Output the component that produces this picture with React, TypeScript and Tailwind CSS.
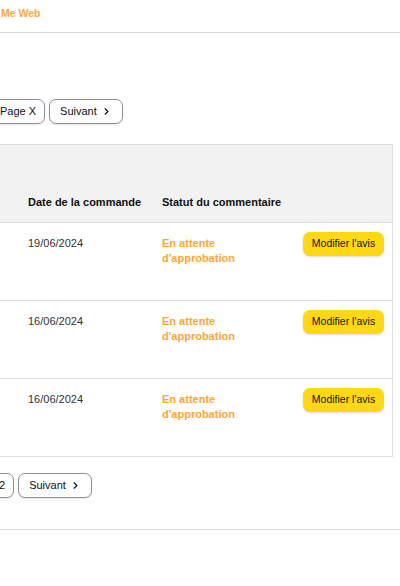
import { ChevronRight } from 'lucide-react';

const rows = [
  { date: '19/06/2024' },
  { date: '16/06/2024' },
  { date: '16/06/2024' },
];

function PageButton({ children, className = '' }: { children: React.ReactNode; className?: string }) {
  return (
    <button
      className={`flex h-[25px] items-center gap-1 rounded-[7px] border border-[#8d9096] bg-white text-[11px] text-[#0f1111] shadow-[0_1px_2px_rgba(15,17,17,0.1)] ${className}`}
    >
      {children}
    </button>
  );
}

function NextButton() {
  return (
    <PageButton className="pl-[10px] pr-[10px]">
      Suivant
      <ChevronRight size={11} strokeWidth={2.5} />
    </PageButton>
  );
}

export default function App() {
  return (
    <div className="min-h-[586px] w-[400px] overflow-hidden bg-white font-['Liberation_Sans',Arial,sans-serif] text-[#0f1111]">
      <div className="flex h-[33px] items-center border-b border-[#d5d9d9] pb-[4px]">
        <span className="ml-[1px] text-[10.5px] font-bold text-[#ffa73d]">Me Web</span>
      </div>

      <div className="mt-[66px] flex items-center gap-[4px]">
        <PageButton className="-ml-[9px] px-[8px]">Page X</PageButton>
        <NextButton />
      </div>

      <div className="mr-[7px] mt-[20px] border-y border-r border-[#dddddd]">
        <div className="flex h-[77px] items-end bg-[#f2f2f2] pb-[12px] text-[11px] font-bold text-[#0f1111]">
          <div className="w-[162px] pl-[28px]">Date de la commande</div>
          <div>Statut du commentaire</div>
        </div>
        {rows.map((r, i) => (
          <div key={i} className="flex h-[78px] items-start border-t border-[#dddddd] pt-[9px] text-[11px]">
            <div className="w-[162px] pl-[28px] pt-[3px] text-[#333333]">{r.date}</div>
            <div className="w-[141px] pt-[4px] font-bold leading-[15px] text-[#ffa630]">
              En attente
              <br />
              d'approbation
            </div>
            <button className="h-[24px] w-[81px] rounded-[7px] bg-[#ffd814] text-[10.5px] text-[#0f1111] shadow-[0_1px_2px_rgba(15,17,17,0.15)]">
              Modifier l'avis
            </button>
          </div>
        ))}
      </div>

      <div className="mt-[16px] flex items-center gap-[4px]">
        <PageButton className="-ml-[10px] px-[8px]">2</PageButton>
        <NextButton />
      </div>

      <div className="mt-[31px] border-b border-[#dddddd]" />
    </div>
  );
}
